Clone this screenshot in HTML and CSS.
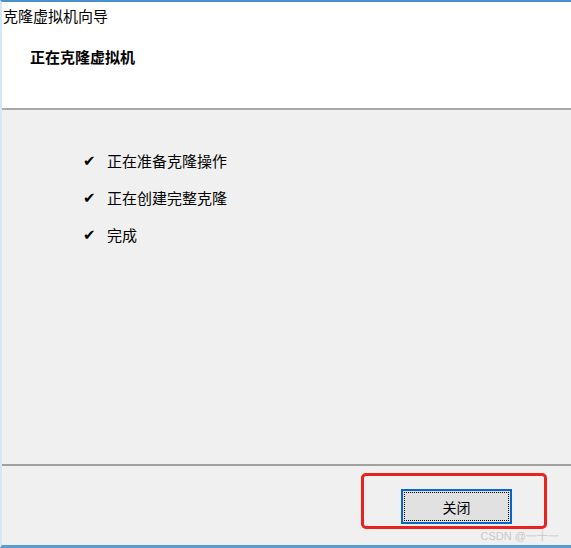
FILE: index.html
```html
<!DOCTYPE html>
<html>
<head>
	<meta charset="UTF-8">
	<title>克隆虚拟机向导</title>
	<link rel="stylesheet" href="styles.css">
</head>
<body>
	<section class="wizard">
		<div class="head">
			<p class="caption">克隆虚拟机向导</p>
			<p class="step">正在克隆虚拟机</p>
		</div>
		<div class="main">
			<ul class="tasks">
				<li><span class="tick">✔</span>正在准备克隆操作</li>
				<li><span class="tick">✔</span>正在创建完整克隆</li>
				<li><span class="tick">✔</span>完成</li>
			</ul>
		</div>
		<div class="foot">
			<div class="mark">
				<input class="btn" type="button" value="关闭" />
			</div>
			<span class="credit">CSDN @一十一</span>
		</div>
	</section>
</body>
</html>
```

FILE: styles.css
```css
html, body {
	margin: 0;
	padding: 0;
}
p {
	margin: 0;
}
body {
	width: 571px;
	height: 548px;
	overflow: hidden;
	font-family: "Noto Sans CJK SC", "Microsoft YaHei", sans-serif;
	color: #000;
	background: #f0f0f0;
}
.wizard {
	display: flex;
	flex-direction: column;
	height: 548px;
	border-top: 2px solid #4a90d0;
	border-left: 2px solid #d6e6f5;
	border-bottom: 3px solid #5b9bd5;
	box-sizing: border-box;
}
.head {
	height: 106px;
	background: #fff;
	border-bottom: 2px solid #a9a9a9;
	padding: 0 0 0 1px;
}
.caption {
	font-size: 15px;
	line-height: 20px;
	margin-top: 4px;
}
.step {
	font-size: 15px;
	font-weight: bold;
	line-height: 20px;
	margin: 21px 0 0 27px;
}
.main {
	flex: 1;
	border-bottom: 2px solid #a0a0a0;
}
.tasks {
	list-style: none;
	margin: 41px 0 0 81px;
	padding: 0;
}
.tasks li {
	font-size: 15px;
	line-height: 20px;
	height: 37px;
	display: flex;
}
.tick {
	width: 24px;
	font-size: 15px;
	font-family: "DejaVu Sans", sans-serif;
}
.foot {
	height: 79px;
	position: relative;
	display: flex;
	justify-content: flex-end;
	padding: 7px 24px 0 0;
	box-sizing: border-box;
}
.mark {
	width: 186px;
	height: 56px;
	border: 3px solid #e8221c;
	border-radius: 5px;
	display: flex;
	align-items: flex-start;
	justify-content: flex-end;
	padding: 13px 32px 0 0;
	box-sizing: border-box;
}
.btn {
	width: 111px;
	height: 35px;
	background: #e1e1e1;
	border: 2px solid #0a64c8;
	outline: 1px dotted #000;
	outline-offset: -4px;
	font-family: "Noto Sans CJK SC", sans-serif;
	font-size: 14px;
	color: #000;
}
.credit {
	position: absolute;
	right: 12px;
	bottom: 1px;
	font-family: "Liberation Sans", sans-serif;
	font-size: 11px;
	color: #c8c8c8;
}
```
